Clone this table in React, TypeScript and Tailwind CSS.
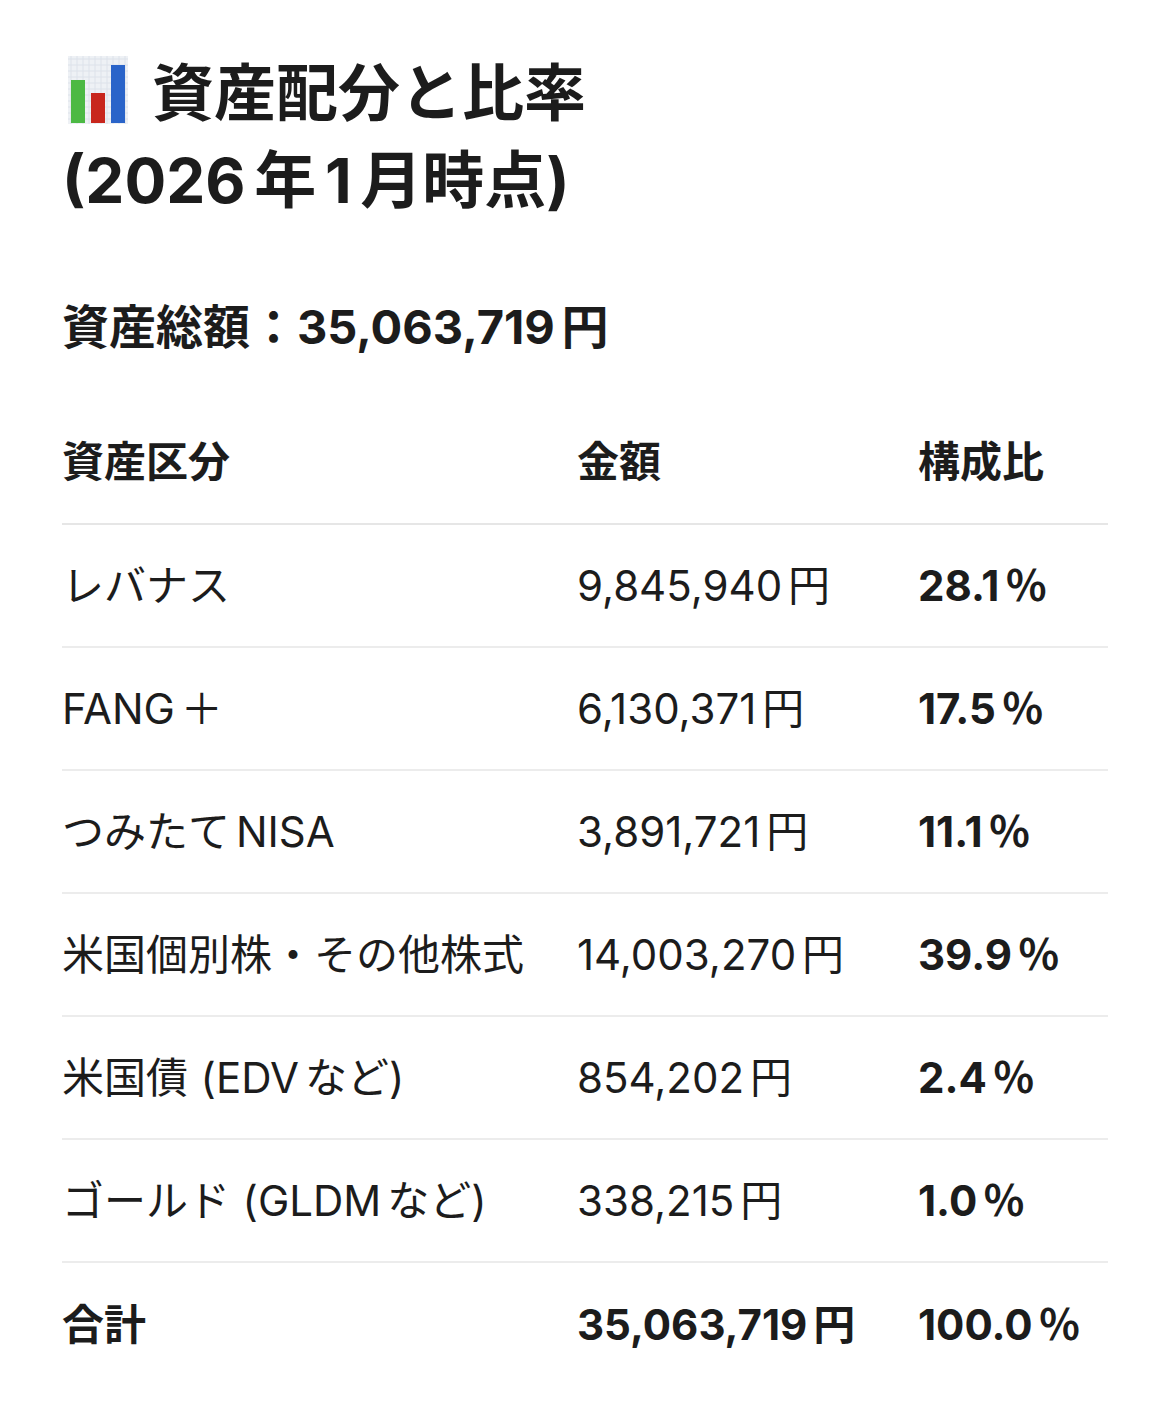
import type { ReactNode } from 'react'

// small gap between latin and CJK, like Safari's text-autospace
const Sp = () => <span className="inline-block w-[0.14em]" />

const rows: { name: ReactNode; amount: string; ratio: string }[] = [
  { name: 'レバナス', amount: '9,845,940', ratio: '28.1' },
  { name: <>FANG<Sp />＋</>, amount: '6,130,371', ratio: '17.5' },
  { name: <>つみたて<Sp />NISA</>, amount: '3,891,721', ratio: '11.1' },
  { name: '米国個別株・その他株式', amount: '14,003,270', ratio: '39.9' },
  { name: <>米国債<span className="ml-[0.3em]">(</span>EDV<Sp />など)</>, amount: '854,202', ratio: '2.4' },
  { name: <>ゴールド<span className="ml-[0.3em]">(</span>GLDM<Sp />など)</>, amount: '338,215', ratio: '1.0' },
]

const ChartIcon = () => (
  <svg width="60" height="68" viewBox="0 0 60 68" className="inline-block ml-[6px] mr-[24px] align-[-8px]">
    <rect x="0" y="0" width="60" height="68" fill="#eef1f5" />
    {[...Array(10)].map((_, i) => (
      <line key={'v' + i} x1={i * 6 + 3} y1="0" x2={i * 6 + 3} y2="68" stroke="#dde2ea" strokeWidth="1" />
    ))}
    {[...Array(11)].map((_, i) => (
      <line key={'h' + i} x1="0" y1={i * 6 + 3} x2="60" y2={i * 6 + 3} stroke="#dde2ea" strokeWidth="1" />
    ))}
    <rect x="3" y="24" width="14" height="43" fill="#4cb944" />
    <rect x="23" y="37" width="14" height="30" fill="#c8261d" />
    <rect x="43" y="9" width="14" height="58" fill="#2a64c9" />
  </svg>
)

const Yen = ({ v }: { v: string }) => (
  <>
    {v}
    <Sp />円
  </>
)

const Pct = ({ v }: { v: string }) => (
  <>
    {v}
    <Sp />％
  </>
)

export default function App() {
  return (
    <div
      className="w-[1170px] min-h-[1418px] bg-white px-[62px] pt-[50px] text-[#1c1c1c]"
      style={{ fontFamily: 'Inter, "Noto Sans CJK JP", sans-serif' }}
    >
      <h1 className="text-[62px] leading-[87px] font-bold">
        <ChartIcon />
        資産配分と比率
        <br />
        (2026<Sp />年<Sp />1<Sp />月時点)
      </h1>

      <h2 className="mt-[68px] text-[47px] leading-[69px] font-bold">
        資産総額：<Yen v="35,063,719" />
      </h2>

      <table className="mt-[39px] w-full border-collapse text-[42px]">
        <thead>
          <tr className="h-[124px] border-b-2 border-[#e6e6e6]">
            <th className="w-[515px] text-left font-bold">資産区分</th>
            <th className="w-[341px] text-left font-bold">金額</th>
            <th className="text-left font-bold">構成比</th>
          </tr>
        </thead>
        <tbody>
          {rows.map((r) => (
            <tr key={r.amount} className="h-[123px] border-b-2 border-[#ececec]">
              <td>{r.name}</td>
              <td>
                <Yen v={r.amount} />
              </td>
              <td className="font-bold">
                <Pct v={r.ratio} />
              </td>
            </tr>
          ))}
          <tr className="h-[123px]">
            <td className="font-bold">合計</td>
            <td className="font-bold">
              <Yen v="35,063,719" />
            </td>
            <td className="font-bold">
              <Pct v="100.0" />
            </td>
          </tr>
        </tbody>
      </table>
    </div>
  )
}
